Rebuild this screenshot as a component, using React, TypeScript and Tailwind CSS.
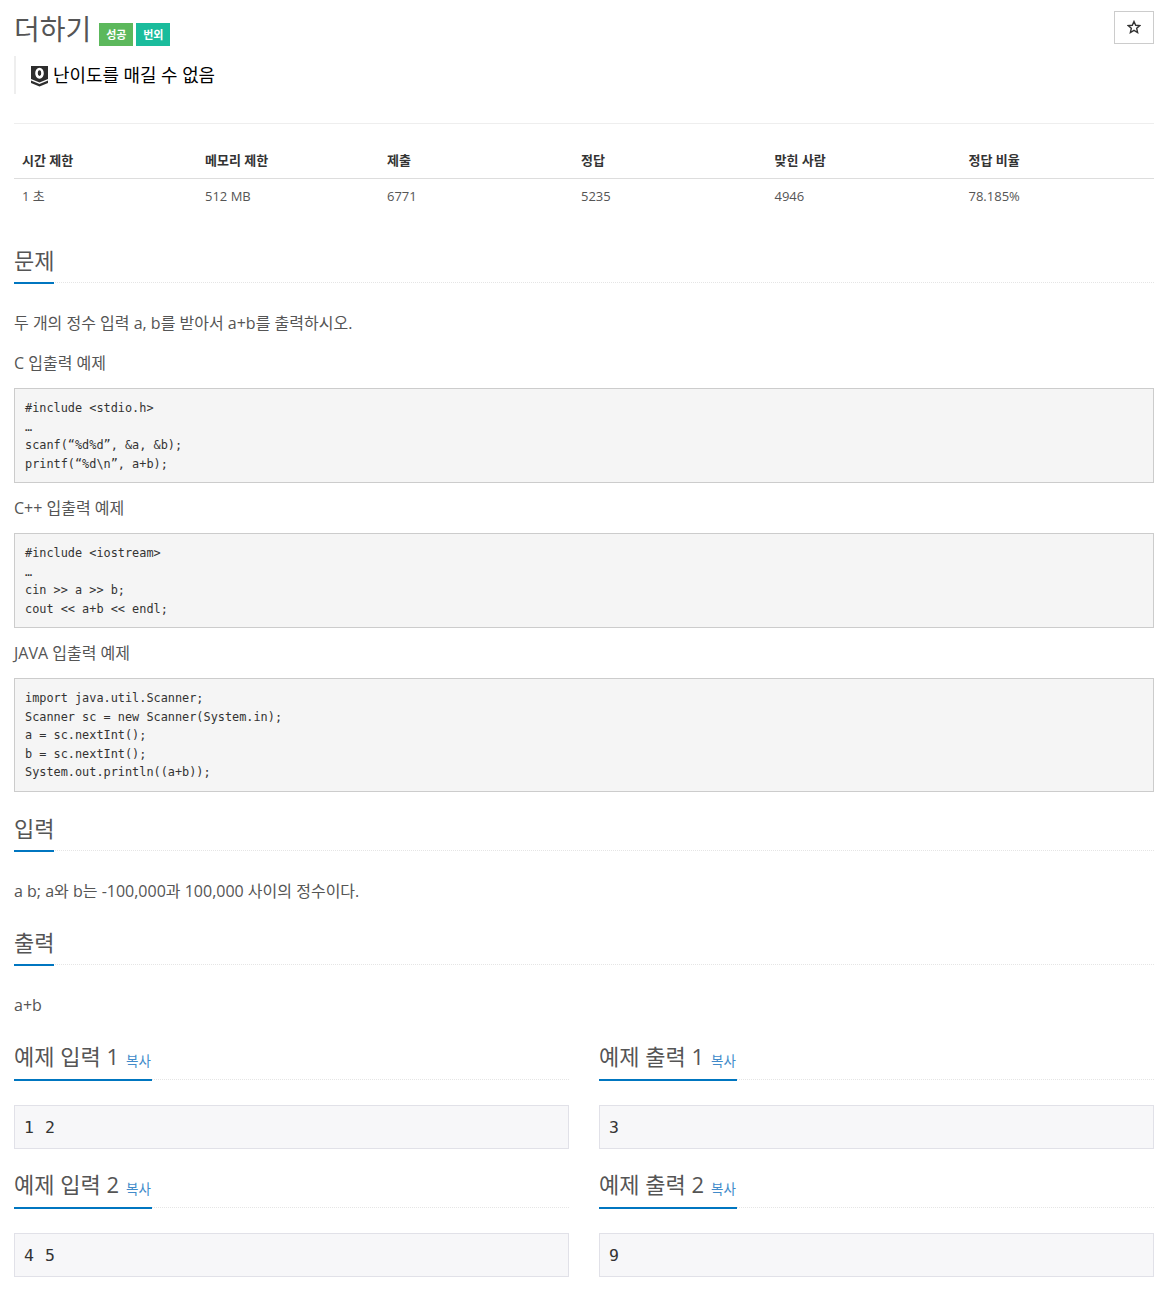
const font = { fontFamily: '"Open Sans","Noto Sans CJK KR",sans-serif' };
const mono = { fontFamily: '"DejaVu Sans Mono","Noto Sans CJK KR",monospace' };

function Heading({ children, extra, tall }: { children: React.ReactNode; extra?: React.ReactNode; tall?: boolean }) {
  return (
    <div className="pb-[1px]">
      <div className={`border-b border-dotted border-[#e5e5e5] flex ${tall ? "h-[39px]" : "h-[38px]"}`}>
        <div className={`border-b-2 border-[#0076c0] flex items-start whitespace-nowrap shrink-0 ${tall ? "h-[40px] pr-[1px]" : "h-[39px]"}`}>
          <span className="text-[22px] leading-[30px] text-[#555]">{children}</span>
          {extra}
        </div>
      </div>
    </div>
  );
}

function Code({ lines }: { lines: string[] }) {
  return (
    <pre className="border border-[#ccc] bg-[#f5f5f5] px-[10px] pt-[10px] pb-[9px] text-[11.86px] leading-[18.5px] text-[#333]" style={mono}>
      {lines.join("\n")}
    </pre>
  );
}

function Sample({ title, value }: { title: string; value: string }) {
  return (
    <div className="flex-1 min-w-0">
      <Heading tall extra={<span className="ml-[7px] mt-[11px] text-[13.5px] leading-[18px] text-[#428bca]">복사</span>}>{title}</Heading>
      <pre className="mt-[24px] h-[44px] border border-[#e1e1e8] bg-[#f7f7f9] px-[9px] text-[16.5px] tracking-[0.57px] leading-[44px] text-[#333]" style={mono}>{value}</pre>
    </div>
  );
}

const head = ["시간 제한", "메모리 제한", "제출", "정답", "맞힌 사람", "정답 비율"];
const row = ["1 초", "512 MB", "6771", "5235", "4946", "78.185%"];
const widths = ["w-[183px]", "w-[182px]", "w-[194px]", "w-[193.5px]", "w-[194px]", "w-[193.5px]"];

export default function App() {
  return (
    <div className="px-[14px] bg-white text-[#555] h-[1291px] overflow-hidden" style={font}>
      <div className="flex items-start justify-between pt-[10px]">
        <div className="flex items-end">
          <h1 className="text-[28px] leading-[36px] pt-[1px] text-[#555]">더하기</h1>
          <div className="flex gap-[3px] ml-[8px] mb-[1px]">
            <span className="w-[34px] h-[23px] pt-[2px] bg-[#5cb85c] text-white text-[11px] font-bold flex items-center justify-center">성공</span>
            <span className="w-[34px] h-[23px] pt-[2px] bg-[#1abc9c] text-white text-[11px] font-bold flex items-center justify-center">번외</span>
          </div>
        </div>
        <button className="w-[40px] h-[33px] border border-[#ccc] bg-white flex items-center justify-center mt-[1px]">
          <svg width="14" height="14" viewBox="0 0 24 24" fill="none" stroke="#333" strokeWidth="2.4" strokeLinejoin="miter" className="mb-[2px]">
            <polygon points="12,2.5 14.9,9 22,9.6 16.6,14.3 18.2,21.5 12,17.8 5.8,21.5 7.4,14.3 2,9.6 9.1,9" />
          </svg>
        </button>
      </div>

      <div className="mt-[9px] h-[38px] border-l-2 border-[#eee] pl-[15px] flex items-center">
        <svg width="17" height="21" viewBox="0 0 17 21" className="mr-[5px] mt-[2px]">
          <path d="M0 0 H17 V13 L8.5 16.5 L0 13 Z" fill="#2d2d2d" />
          <path d="M0 14.5 L8.5 18 L17 14.5 V17 L8.5 20.5 L0 17 Z" fill="#2d2d2d" />
          <ellipse cx="8.5" cy="7.2" rx="3" ry="4.2" fill="none" stroke="#fff" strokeWidth="2.6" />
        </svg>
        <span className="text-[17.9px] leading-[24px] text-black">난이도를 매길 수 없음</span>
      </div>

      <div className="mt-[29px] border-t border-[#eee]" />

      <table className="mt-[18px] w-full table-fixed text-[13px] text-[#555]">
        <thead>
          <tr className="border-b border-[#ddd]">
            {head.map((h, i) => (
              <th key={h} className={`${widths[i]} px-[8px] pt-[2px] h-[36px] text-left font-bold text-[#333]`}>{h}</th>
            ))}
          </tr>
        </thead>
        <tbody>
          <tr>
            {row.map((c) => (
              <td key={c} className="px-[8px] h-[36px]">{c}</td>
            ))}
          </tr>
        </tbody>
      </table>

      <div className="mt-[31px]"><Heading>문제</Heading></div>
      <p className="mt-[28px] text-[16px] leading-[22px]">두 개의 정수 입력 a, b를 받아서 a+b를 출력하시오.</p>
      <p className="mt-[18px] text-[16px] leading-[22px]">C 입출력 예제</p>
      <div className="mt-[14px]"><Code lines={["#include <stdio.h>", "…", "scanf(“%d%d”, &a, &b);", "printf(“%d\\n”, a+b);"]} /></div>
      <p className="mt-[14px] text-[16px] leading-[22px]">C++ 입출력 예제</p>
      <div className="mt-[14px]"><Code lines={["#include <iostream>", "…", "cin >> a >> b;", "cout << a+b << endl;"]} /></div>
      <p className="mt-[14px] text-[16px] leading-[22px]">JAVA 입출력 예제</p>
      <div className="mt-[14px]"><Code lines={["import java.util.Scanner;", "Scanner sc = new Scanner(System.in);", "a = sc.nextInt();", "b = sc.nextInt();", "System.out.println((a+b));"]} /></div>

      <div className="mt-[21.5px]"><Heading>입력</Heading></div>
      <p className="mt-[28px] text-[16px] leading-[22px]">a b; a와 b는 -100,000과 100,000 사이의 정수이다.</p>

      <div className="mt-[25px]"><Heading>출력</Heading></div>
      <p className="mt-[28px] text-[16px] leading-[22px]">a+b</p>

      <div className="mt-[25px] grid grid-cols-2 gap-x-[30px] gap-y-[20px]">
        <Sample title="예제 입력 1" value="1 2" />
        <Sample title="예제 출력 1" value="3" />
        <Sample title="예제 입력 2" value="4 5" />
        <Sample title="예제 출력 2" value="9" />
      </div>
    </div>
  );
}
